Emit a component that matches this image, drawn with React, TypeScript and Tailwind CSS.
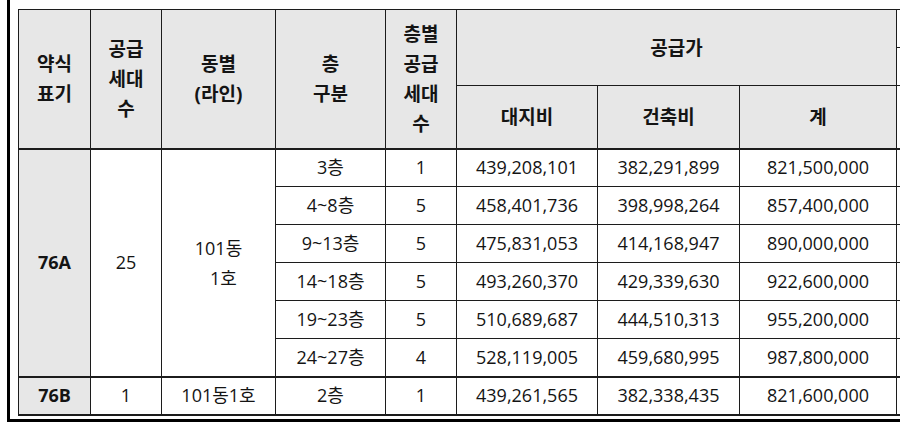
const font = "font-['Open_Sans','Noto_Sans_CJK_KR',sans-serif]"

const rowsA = [
    ["3층", "1", "439,208,101", "382,291,899", "821,500,000"],
    ["4~8층", "5", "458,401,736", "398,998,264", "857,400,000"],
    ["9~13층", "5", "475,831,053", "414,168,947", "890,000,000"],
    ["14~18층", "5", "493,260,370", "429,339,630", "922,600,000"],
    ["19~23층", "5", "510,689,687", "444,510,313", "955,200,000"],
    ["24~27층", "4", "528,119,005", "459,680,995", "987,800,000"],
]

const cell = "border border-[#1c1c1c] p-0 text-center align-middle"
const head = `${cell} bg-[#e7e7e7] font-bold text-[19px] leading-[30px]`

export default function App() {
    return (
        <div className={`w-[900px] h-[426px] overflow-hidden bg-white text-[18px] text-[#141414] ${font}`}>
            <div className="ml-[7px] w-max border-l-[3px] border-b-[3px] border-black pt-[9px] pl-[8px] pb-[3px]">
                <table className="table-fixed border-collapse">
                    <colgroup>
                        <col className="w-[72px]" />
                        <col className="w-[71px]" />
                        <col className="w-[114px]" />
                        <col className="w-[110px]" />
                        <col className="w-[71px]" />
                        <col className="w-[141px]" />
                        <col className="w-[142px]" />
                        <col className="w-[157px]" />
                        <col className="w-[80px]" />
                    </colgroup>
                    <thead>
                        <tr className="h-[76px]">
                            <th rowSpan={2} className={`${head} border-b-2`}>
                                약식
                                <br />
                                표기
                            </th>
                            <th rowSpan={2} className={`${head} border-b-2`}>
                                공급
                                <br />
                                세대
                                <br />수
                            </th>
                            <th rowSpan={2} className={`${head} border-b-2`}>
                                동별
                                <br />
                                (라인)
                            </th>
                            <th rowSpan={2} className={`${head} border-b-2`}>
                                층
                                <br />
                                구분
                            </th>
                            <th rowSpan={2} className={`${head} border-b-2`}>
                                층별
                                <br />
                                공급
                                <br />
                                세대
                                <br />수
                            </th>
                            <th colSpan={3} className={head}>
                                공급가
                            </th>
                            <td className={`${cell} align-top`}>
                                <div className="h-[38px] border-b border-[#1c1c1c]" />
                            </td>
                        </tr>
                        <tr className="h-[63px]">
                            <th className={`${head} border-b-2`}>대지비</th>
                            <th className={`${head} border-b-2`}>건축비</th>
                            <th className={`${head} border-b-2`}>계</th>
                            <td className={`${cell} border-b-2`} />
                        </tr>
                    </thead>
                    <tbody>
                        {rowsA.map((r, i) => (
                            <tr key={i} className="h-[38px]">
                                {i === 0 && (
                                    <>
                                        <td rowSpan={6} className={`${cell} bg-[#e7e7e7] font-bold`}>
                                            76A
                                        </td>
                                        <td rowSpan={6} className={cell}>
                                            25
                                        </td>
                                        <td rowSpan={6} className={`${cell} leading-[30px]`}>
                                            101동
                                            <br />
                                            <span className="pl-[10px]">1호</span>
                                        </td>
                                    </>
                                )}
                                {r.map((v, j) => (
                                    <td key={j} className={cell}>
                                        {v}
                                    </td>
                                ))}
                                <td className={cell} />
                            </tr>
                        ))}
                        <tr className="h-[38px]">
                            <td className={`${cell} border-t-2 border-b-2 bg-[#e7e7e7] font-bold`}>76B</td>
                            <td className={`${cell} border-t-2 border-b-2`}>1</td>
                            <td className={`${cell} border-t-2 border-b-2`}>101동1호</td>
                            <td className={`${cell} border-t-2 border-b-2`}>2층</td>
                            <td className={`${cell} border-t-2 border-b-2`}>1</td>
                            <td className={`${cell} border-t-2 border-b-2`}>439,261,565</td>
                            <td className={`${cell} border-t-2 border-b-2`}>382,338,435</td>
                            <td className={`${cell} border-t-2 border-b-2`}>821,600,000</td>
                            <td className={`${cell} border-t-2 border-b-2`} />
                        </tr>
                    </tbody>
                </table>
            </div>
        </div>
    )
}
